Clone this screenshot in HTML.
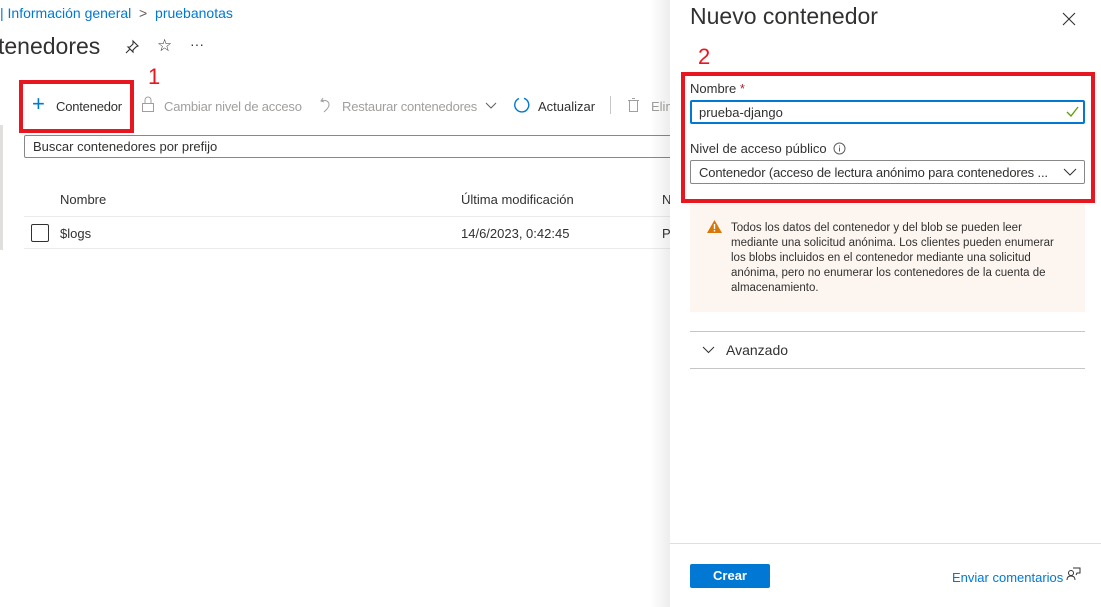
<!DOCTYPE html>
<html><head><meta charset="utf-8"><style>
*{margin:0;padding:0;box-sizing:border-box}
body{width:1101px;height:607px;overflow:hidden;background:#fff;font-family:"Liberation Sans",sans-serif;font-size:13px;color:#323130;position:relative}
.a{position:absolute;white-space:nowrap}
.blue{color:#0078d4}
.gray{color:#a19f9d}
</style></head><body>
<div class="a blue" style="left:0;top:5px;font-size:14px"><span style="color:#0078d4">|</span> Información general <span style="color:#605e5c">&nbsp;&gt;&nbsp;</span> pruebanotas</div>
<div class="a" style="left:-2px;top:33px;font-size:23px;color:#323130">tenedores</div>
<svg class="a" style="left:124px;top:39px" width="16" height="16" viewBox="0 0 16 16" fill="none" stroke="#323130" stroke-width="1.1"><path d="M9 2l5 5-2 1-3 3 0 2-5-5 2 0 3-3z M6 10l-4 4"/></svg>
<div class="a" style="left:157px;top:36px;font-size:17px">☆</div>
<div class="a" style="left:190px;top:36px;font-size:14px">···</div>
<div class="a" style="left:19px;top:80px;width:115px;height:53px;border:4px solid #e8161f"></div>
<div class="a" style="left:148px;top:64px;font-size:22px;color:#e8161f">1</div>
<div class="a" style="left:32px;top:92px;font-size:22px;color:#0078d4;font-weight:300;line-height:24px">+</div>
<div class="a" style="left:56px;top:99px;letter-spacing:-0.2px">Contenedor</div>
<svg class="a" style="left:141px;top:96px" width="14" height="17" viewBox="0 0 14 17" fill="none" stroke="#a19f9d"><rect x="1.5" y="7.5" width="11" height="8"/><path d="M4 7.5V4a3 3 0 0 1 6 0v3.5"/></svg>
<div class="a gray" style="left:164px;top:99px;letter-spacing:-0.2px">Cambiar nivel de acceso</div>
<svg class="a" style="left:319px;top:96px" width="14" height="17" viewBox="0 0 14 17" fill="none" stroke="#a19f9d"><path d="M4 2L2 5l3 1 M2 5c6-2 11 2 6 8L5 16"/></svg>
<div class="a gray" style="left:342px;top:99px;letter-spacing:-0.2px">Restaurar contenedores</div>
<svg class="a" style="left:485px;top:102px" width="12" height="8" viewBox="0 0 12 8" fill="none" stroke="#605e5c"><path d="M1 1l5 5 5-5"/></svg>
<svg class="a" style="left:513px;top:96px" width="18" height="18" viewBox="0 0 18 18" fill="none" stroke="#0078d4" stroke-width="1.4"><path d="M6 2.5A7 7 0 1 0 11 2.3"/></svg>
<div class="a" style="left:538px;top:99px">Actualizar</div>
<div class="a" style="left:610px;top:96px;width:1px;height:18px;background:#c8c6c4"></div>
<svg class="a" style="left:627px;top:97px" width="13" height="16" viewBox="0 0 13 16" fill="none" stroke="#a19f9d"><rect x="2.5" y="3.5" width="8" height="11"/><path d="M1 3.5h11 M5 1.5h3"/></svg>
<div class="a gray" style="left:651px;top:99px">Elim</div>
<div class="a" style="left:24px;top:135px;width:660px;height:23px;border:1px solid #8a8886;border-radius:2px"></div>
<div class="a" style="left:33px;top:139px;color:#323130">Buscar contenedores por prefijo</div>
<div class="a" style="left:0;top:125px;width:3px;height:125px;background:#e1dfdd"></div>
<div class="a" style="left:60px;top:192px">Nombre</div>
<div class="a" style="left:461px;top:192px">Última modificación</div>
<div class="a" style="left:662px;top:192px">N</div>
<div class="a" style="left:24px;top:216px;width:650px;height:1px;background:#edebe9"></div>
<div class="a" style="left:31px;top:224px;width:18px;height:18px;border:1px solid #323130;border-radius:2px"></div>
<div class="a" style="left:60px;top:226px">$logs</div>
<div class="a" style="left:461px;top:226px">14/6/2023, 0:42:45</div>
<div class="a" style="left:662px;top:226px">P</div>
<div class="a" style="left:24px;top:248px;width:650px;height:1px;background:#edebe9"></div>

<div class="a" style="left:650px;top:0;width:20px;height:607px;background:linear-gradient(to right,rgba(0,0,0,0),rgba(0,0,0,0.07))"></div>
<div class="a" style="left:670px;top:0;width:431px;height:607px;background:#fff"></div>
<div class="a" style="left:690px;top:3px;font-size:23px;color:#323130">Nuevo contenedor</div>
<svg class="a" style="left:1062px;top:12px" width="14" height="14" viewBox="0 0 14 14" stroke="#323130" stroke-width="1.1"><path d="M1 1l12 12M13 1L1 13"/></svg>
<div class="a" style="left:698px;top:44px;font-size:22px;color:#e8161f">2</div>
<div class="a" style="left:681px;top:72px;width:414px;height:131px;border:4px solid #e8161f"></div>
<div class="a" style="left:690px;top:81px">Nombre <span style="color:#a4262c">*</span></div>
<div class="a" style="left:690px;top:100px;width:395px;height:24px;border:2px solid #0078d4;border-radius:2px"></div>
<div class="a" style="left:699px;top:105px">prueba-django</div>
<svg class="a" style="left:1066px;top:106px" width="13" height="11" viewBox="0 0 13 11" fill="none" stroke="#57a300" stroke-width="1.3"><path d="M1 6l4 4 7-9"/></svg>
<div class="a" style="left:690px;top:141px">Nivel de acceso público</div>
<svg class="a" style="left:833px;top:142px" width="13" height="13" viewBox="0 0 13 13" fill="none" stroke="#605e5c"><circle cx="6.5" cy="6.5" r="5.5"/><path d="M6.5 5.5v4M6.5 3.5v1"/></svg>
<div class="a" style="left:690px;top:160px;width:395px;height:24px;border:1px solid #8a8886;border-radius:2px"></div>
<div class="a" style="left:699px;top:165px;letter-spacing:-0.15px">Contenedor (acceso de lectura anónimo para contenedores ...</div>
<svg class="a" style="left:1063px;top:168px" width="14" height="8" viewBox="0 0 14 8" fill="none" stroke="#323130"><path d="M1 1l6 6 6-6"/></svg>
<div class="a" style="left:690px;top:204px;width:395px;height:108px;background:#fdf6f0"></div>
<svg class="a" style="left:707px;top:220px" width="15" height="13" viewBox="0 0 15 13"><path d="M7.5 0L15 13H0z" fill="#d97706"/><path d="M7.5 4v5M7.5 10v1.5" stroke="#fff" stroke-width="1.4"/></svg>
<div class="a" style="left:731px;top:221px;font-size:11.5px;line-height:15px;color:#323130;white-space:normal;width:340px">Todos los datos del contenedor y del blob se pueden leer mediante una solicitud anónima. Los clientes pueden enumerar los blobs incluidos en el contenedor mediante una solicitud anónima, pero no enumerar los contenedores de la cuenta de almacenamiento.</div>
<div class="a" style="left:690px;top:331px;width:395px;height:1px;background:#c8c6c4"></div>
<svg class="a" style="left:702px;top:346px" width="13" height="8" viewBox="0 0 13 8" fill="none" stroke="#323130"><path d="M1 1l5.5 5.5L12 1"/></svg>
<div class="a" style="left:726px;top:342px;font-size:14px">Avanzado</div>
<div class="a" style="left:690px;top:368px;width:395px;height:1px;background:#c8c6c4"></div>
<div class="a" style="left:670px;top:543px;width:431px;height:1px;background:#e1dfdd"></div>
<div class="a" style="left:690px;top:564px;width:80px;height:24px;background:#0078d4;border-radius:2px;color:#fff;font-weight:bold;text-align:center;line-height:24px">Crear</div>
<div class="a blue" style="left:952px;top:570px">Enviar comentarios</div>
<svg class="a" style="left:1066px;top:567px" width="15" height="15" viewBox="0 0 15 15" fill="none" stroke="#323130"><circle cx="5" cy="6" r="2.5"/><path d="M1 13c0-3 2-4 4-4s4 1 4 4 M7 1h7v5h-3l-1 2"/></svg>
</body></html>
